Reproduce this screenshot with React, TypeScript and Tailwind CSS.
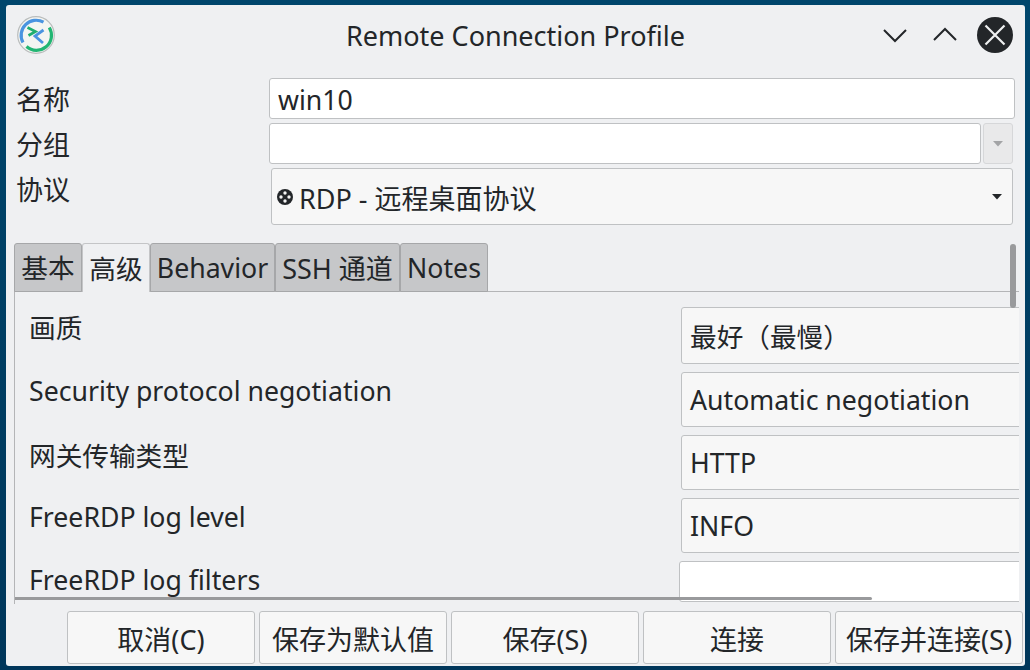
const font = '[font-family:"Noto_Sans","Noto_Sans_CJK_SC",sans-serif]';

function Caret({ color }: { color: string }) {
  return (
    <svg width="10" height="6" viewBox="0 0 10 6" className="shrink-0">
      <path d="M0 0H10L5 5.5Z" fill={color} />
    </svg>
  );
}

function Logo() {
  return (
    <svg width="38" height="38" viewBox="0 0 38 38" className="shrink-0">
      <circle cx="19" cy="19" r="18.3" fill="#f4f5f2" stroke="#b9bcbc" strokeWidth="1.2" />
      <path d="M26.5 6.2A15 15 0 0 0 6 26.5" fill="none" stroke="#4a94e0" strokeWidth="3.2" />
      <path d="M32.3 11.5A15 15 0 0 1 9.5 30.5" fill="none" stroke="#22b573" strokeWidth="3.2" />
      <path d="M10.5 11.5L18.5 15.5L11.5 19.5" fill="none" stroke="#1fae70" strokeWidth="2.6" />
      <path d="M26.5 14L18 20L26 27" fill="none" stroke="#4a94e0" strokeWidth="2.8" />
    </svg>
  );
}

function RdpIcon() {
  return (
    <svg width="16" height="16" viewBox="0 0 16 16" className="shrink-0">
      <circle cx="8" cy="8" r="8" fill="#232629" />
      <circle cx="8" cy="4" r="1.7" fill="#f4f4f4" />
      <circle cx="8" cy="12" r="1.7" fill="#f4f4f4" />
      <circle cx="4" cy="8" r="1.7" fill="#f4f4f4" />
      <circle cx="12" cy="8" r="1.7" fill="#f4f4f4" />
    </svg>
  );
}

function Combo({ label, value, labelH }: { label: string; value: string; labelH: string }) {
  return (
    <div className="flex mt-[8px]">
      <div className={`w-[652px] shrink-0 ${labelH} flex items-center whitespace-nowrap`}>{label}</div>
      <div className="w-[400px] shrink-0 h-[55px] pl-[8px] pt-[2px] flex items-center bg-[#f7f7f7] border border-[#bfc1c3] rounded-[3px] whitespace-nowrap">
        {value}
      </div>
    </div>
  );
}

const tabs = [
  { t: "基本", w: "w-[68px]", active: false, big: false },
  { t: "高级", w: "w-[68px]", active: true, big: false },
  { t: "Behavior", w: "w-[125px]", active: false, big: false },
  { t: "SSH 通道", w: "w-[125px]", active: false, big: true },
  { t: "Notes", w: "w-[88px]", active: false, big: false },
];

const buttons = ["取消(C)", "保存为默认值", "保存(S)", "连接", "保存并连接(S)"];

export default function App() {
  return (
    <div className={`w-[1030px] h-[670px] overflow-hidden bg-gradient-to-b from-[#00466c] to-[#00365a] pt-[5px] pl-[6px] pr-[5px] pb-[4px] ${font} text-[26.67px] leading-none text-[#232629]`}>
      <div className="relative w-[1019px] h-[661px] bg-[#eff0f2] rounded-[3px] flex flex-col">
        {/* title bar */}
        <div className="relative h-[73px] shrink-0 flex items-start pl-[11px] pt-[11px]">
          <Logo />
          <div className="flex-1 h-[38px] pt-[1px] flex items-center justify-center -ml-[49px] text-[27px] whitespace-nowrap">Remote Connection Profile</div>
          <div className="absolute right-[12px] top-[12px] flex items-center">
            <svg width="24" height="16" viewBox="0 0 24 16" className="mr-[26px]">
              <path d="M1 3L12 14L23 3" fill="none" stroke="#232629" strokeWidth="2" />
            </svg>
            <svg width="24" height="16" viewBox="0 0 24 16" className="mr-[20px]">
              <path d="M1 13L12 2L23 13" fill="none" stroke="#232629" strokeWidth="2" />
            </svg>
            <svg width="36" height="36" viewBox="0 0 36 36">
              <circle cx="18" cy="18" r="18" fill="#232629" />
              <path d="M8.5 8.5L27.5 27.5M27.5 8.5L8.5 27.5" stroke="#eff0f1" strokeWidth="2.2" />
            </svg>
          </div>
        </div>

        {/* form rows */}
        <div className="flex pl-[11px] h-[41px] shrink-0">
          <div className="w-[252px] pt-[2px] -ml-px flex items-center text-[27px]">名称</div>
          <div className="ml-px w-[746px] h-[41px] pl-[8px] pt-[3px] flex items-center bg-white border border-[#bfc1c3] rounded-[3px]">win10</div>
        </div>
        <div className="flex pl-[11px] mt-[4px] h-[41px] shrink-0">
          <div className="w-[252px] pt-[2px] -ml-px flex items-center text-[27px]">分组</div>
          <div className="ml-px w-[712px] h-[41px] bg-white border border-[#bfc1c3] rounded-[3px]" />
          <div className="ml-[2px] w-[30px] h-[41px] bg-[#e9e9ea] border border-[#d6d7d9] rounded-[3px] flex items-center justify-center">
            <Caret color="#a3a4a6" />
          </div>
        </div>
        <div className="flex pl-[11px] mt-[4px] h-[57px] shrink-0">
          <div className="w-[254px] h-[41px] pt-[2px] -ml-px flex items-center text-[27px]">协议</div>
          <div className="ml-px w-[742px] h-[57px] pl-[5px] pr-[10px] flex items-center bg-[#f7f7f7] border border-[#bfc1c3] rounded-[3px]">
            <RdpIcon />
            <span className="ml-[6px] flex-1 pt-[4px] text-[27px] whitespace-nowrap">RDP - 远程桌面协议</span>
            <Caret color="#232629" />
          </div>
        </div>

        {/* tabs */}
        <div className="flex pl-[8px] mt-[18px] h-[48px] shrink-0 relative z-10">
          {tabs.map((tab) => (
            <div
              key={tab.t}
              className={`${tab.w} h-[49px] pt-[2px] flex items-center justify-center whitespace-nowrap rounded-t-[3px] border ${
                tab.active ? "bg-[#eff0f2] border-[#c4c5c7] border-b-0" : "bg-[#c6c7c9] border-[#a6a7a9]"
              } ${tab.big ? "text-[27px]" : ""}`}
            >
              {tab.t}
            </div>
          ))}
        </div>

        {/* pane */}
        <div className="relative ml-[8px] w-[1005px] h-[313px] shrink-0 overflow-hidden border-l border-t border-[#b4b5b7] pl-[14px] pt-[15px]">
          <div className="flex">
            <div className="w-[652px] shrink-0 h-[42px] flex items-center whitespace-nowrap">画质</div>
            <div className="w-[400px] shrink-0 h-[57px] pl-[8px] pt-[4px] flex items-center bg-[#f7f7f7] border border-[#bfc1c3] rounded-[3px] whitespace-nowrap">最好（最慢）</div>
          </div>
          <Combo labelH="h-[38px]" label="Security protocol negotiation" value="Automatic negotiation" />
          <Combo labelH="h-[42px]" label="网关传输类型" value="HTTP" />
          <Combo labelH="h-[38px]" label="FreeRDP log level" value="INFO" />
          <div className="flex mt-[8px]">
            <div className="w-[650px] shrink-0 h-[38px] flex items-center whitespace-nowrap">FreeRDP log filters</div>
            <div className="w-[400px] shrink-0 h-[41px] bg-white border border-[#bfc1c3] rounded-[3px]" />
          </div>
          <div className="absolute left-0 top-[305px] w-[857px] h-[3px] bg-[#999a9c] rounded-r-[2px]" />
        </div>

        {/* buttons */}
        <div className="flex gap-[4px] pl-[61px] mt-[7px] shrink-0">
          {buttons.map((b) => (
            <div key={b} className="w-[188px] h-[53px] pt-[3px] flex items-center justify-center whitespace-nowrap text-[27px] bg-[#f7f7f7] border border-[#bfc1c3] rounded-[3px]">
              {b}
            </div>
          ))}
        </div>

        {/* vertical overlay scrollbar */}
        <div className="absolute left-[1004px] top-[239px] w-[6px] h-[64px] bg-[#999a9c] rounded-[3px] z-20" />
      </div>
    </div>
  );
}
